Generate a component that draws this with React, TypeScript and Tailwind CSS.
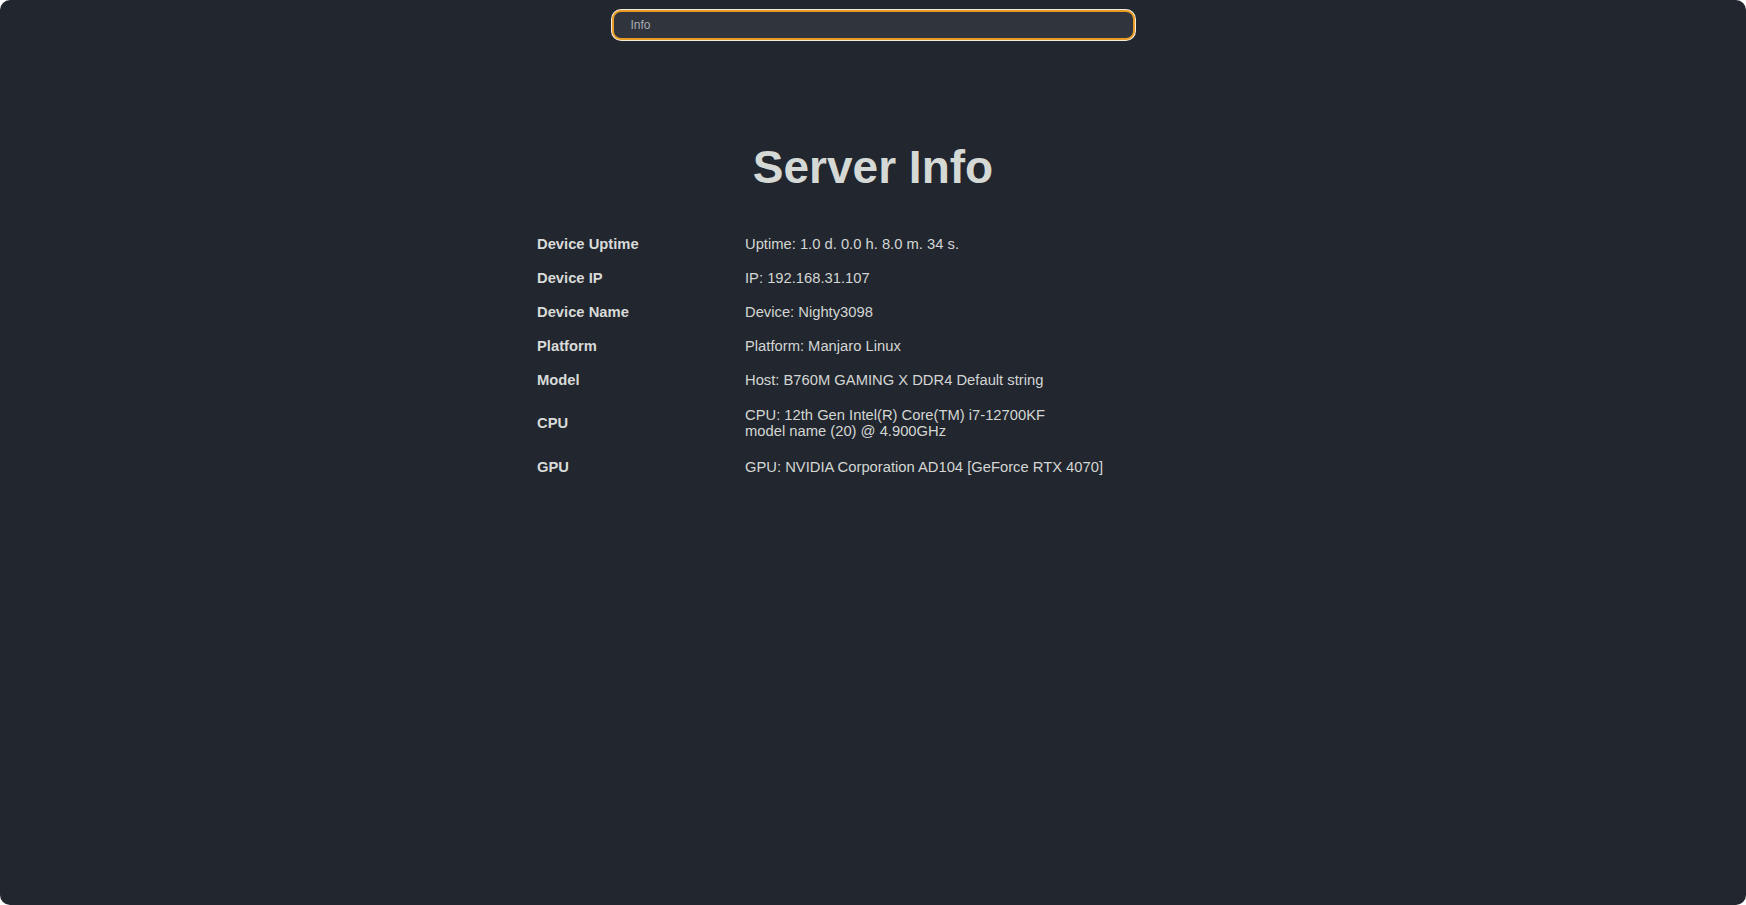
const rows: { label: string; value: string[] }[] = [
  { label: "Device Uptime", value: ["Uptime: 1.0 d. 0.0 h. 8.0 m. 34 s."] },
  { label: "Device IP", value: ["IP: 192.168.31.107"] },
  { label: "Device Name", value: ["Device: Nighty3098"] },
  { label: "Platform", value: ["Platform: Manjaro Linux"] },
  { label: "Model", value: ["Host: B760M GAMING X DDR4 Default string"] },
  { label: "CPU", value: ["CPU: 12th Gen Intel(R) Core(TM) i7-12700KF", "model name (20) @ 4.900GHz"] },
  { label: "GPU", value: ["GPU: NVIDIA Corporation AD104 [GeForce RTX 4070]"] },
];

export default function App() {
  return (
    <div className="bg-white h-[905px] w-full">
      <div
        className="h-full w-full rounded-[10px] bg-[#22262f] flex flex-col items-center"
        style={{ fontFamily: '"Liberation Sans", Arial, sans-serif' }}
      >
        <div className="pt-[10px]">
          <div className="w-[523px] h-[30px] rounded-[9px] border-2 border-[#e89c25] shadow-[0_0_0_1px_#f4ead8] bg-[#30343d] flex items-center px-[17px]">
            <span className="text-[12px] text-[#a9adb3]">Info</span>
          </div>
        </div>

        <h1 className="mt-[101px] text-[46px] font-bold text-[#d5d9d5] leading-[1.15]">Server Info</h1>

        <div className="mt-[33px] w-[672px] text-[14.75px] leading-[16px] text-[#d3d6d3]">
          {rows.map((r) => (
            <div key={r.label} className="grid grid-cols-[208px_1fr] items-center py-[9px]">
              <div className="font-bold text-[#d8dbd8]">{r.label}</div>
              <div className={r.value.length > 1 ? "py-[1.5px]" : ""}>
                {r.value.map((v) => (
                  <div key={v}>{v}</div>
                ))}
              </div>
            </div>
          ))}
        </div>
      </div>
    </div>
  );
}
